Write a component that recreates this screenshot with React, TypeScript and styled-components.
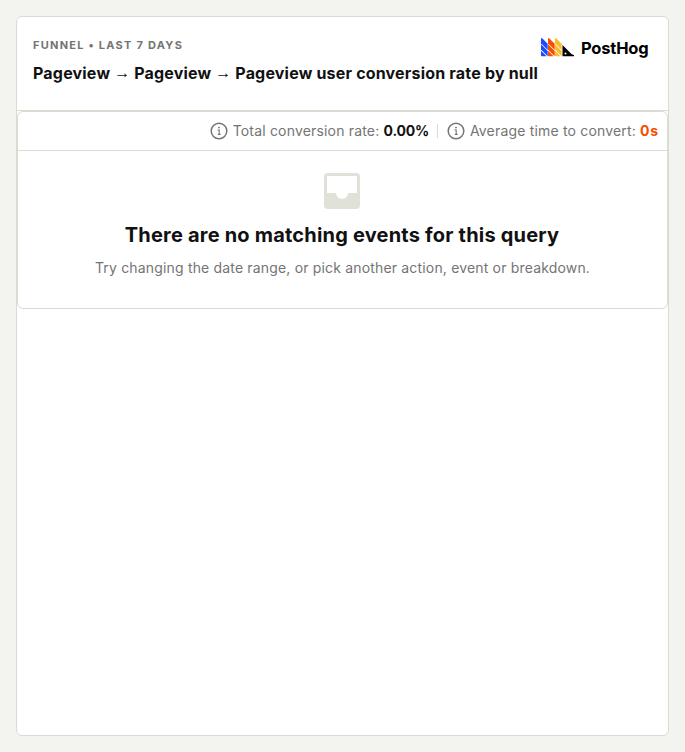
import React from 'react';
import styled, { createGlobalStyle } from 'styled-components';

const GlobalStyle = createGlobalStyle`
  *, *::before, *::after { box-sizing: border-box; }
  body {
    margin: 0;
    background: #f3f4ef;
    color: #111;
    font-family: Inter, 'Liberation Sans', sans-serif;
    font-size: 14px;
    line-height: 20px;
  }
`;

const Page = styled.main`
  height: 100vh;
  padding: 16px;
`;

const Card = styled.section`
  height: 100%;
  background: #fff;
  border: 1px solid #dadbd2;
  border-radius: 6px;
  overflow: hidden;
`;

const Header = styled.header`
  display: flex;
  justify-content: space-between;
  height: 94px;
  padding: 20px 16px 0;
  border-bottom: 1px solid #dadbd2;
`;

const Heading = styled.div`
  display: flex;
  flex-direction: column;
  gap: 10px;
  white-space: nowrap;
`;

const Eyebrow = styled.h5`
  margin: 0;
  color: #747474;
  font-size: 11px;
  line-height: 16px;
  font-weight: 700;
  letter-spacing: 1.25px;
  text-transform: uppercase;
`;

const Title = styled.h4`
  margin: 0;
  font-size: 16px;
  line-height: 20px;
  font-weight: 700;
  letter-spacing: 0.19px;
`;

const Arrow = styled.span`
  display: inline-block;
  font-family: 'Liberation Sans', sans-serif;
  font-weight: 400;
  line-height: 1;
  letter-spacing: 0;
  transform: translateY(-1px);
`;

const Brand = styled.div`
  display: flex;
  align-items: flex-start;
  flex: none;
  width: 111px;
`;

const Mark = styled.svg`
  flex: none;
  width: 34px;
  height: 20px;
  margin-top: 1px;
`;

const Wordmark = styled.span`
  margin-left: 6px;
  color: #000;
  font-size: 16.5px;
  line-height: 22px;
  font-weight: 700;
  letter-spacing: -0.2px;
`;

const Insight = styled.div`
  height: 198px;
  border: 1px solid #dadbd2;
  border-radius: 6px;
`;

const Metrics = styled.div`
  display: flex;
  align-items: center;
  justify-content: flex-end;
  height: 39px;
  padding-right: 8px;
  border-bottom: 1px solid #dadbd2;
`;

const Metric = styled.div`
  display: flex;
  align-items: center;
  color: #747474;
  letter-spacing: 0.18px;
  white-space: pre;
`;

const Divider = styled.span`
  width: 1px;
  height: 14px;
  margin: 0 9px 0 8px;
  background: #dadbd2;
`;

const InfoSvg = styled.svg`
  width: 18px;
  height: 18px;
  margin-right: 5px;
`;

const Value = styled.strong<{ $accent?: boolean }>`
  color: ${({ $accent }) => ($accent ? '#f54e00' : '#111')};
  font-weight: 700;
  letter-spacing: ${({ $accent }) => ($accent ? '0.8px' : '-0.2px')};
`;

const Empty = styled.div`
  display: flex;
  flex-direction: column;
  align-items: center;
  padding-top: 22px;
  text-align: center;
`;

const Tray = styled.svg`
  width: 36px;
  height: 36px;
  margin-right: 1px;
`;

const EmptyTitle = styled.h2`
  margin: 12px 1px 9px 0;
  font-size: 20px;
  line-height: 28px;
  font-weight: 700;
  letter-spacing: 0.2px;
`;

const EmptyText = styled.p`
  margin: 0;
  color: #747474;
  letter-spacing: 0.17px;
`;

const InfoIcon = () => (
  <InfoSvg viewBox="0 0 18 18" fill="none" stroke="#747474" aria-hidden="true">
    <circle cx="9" cy="9" r="7.8" strokeWidth="1.5" />
    <path d="M7.5 8H9.2V12.4M7.8 12.4H10.6" strokeWidth="1.1" />
    <circle cx="9" cy="5.6" r="0.9" fill="#747474" stroke="none" />
  </InfoSvg>
);

const Stripes = () => (
  <>
    <path d="M0 .9Q.1-.5 1.2.3L6.7 5.8V11.9L0 5.2Z" />
    <path d="M0 6.3L6.7 13V18.3L0 11.6Z" />
    <path d="M0 12.7L5.6 18.3H.7Q0 18.3 0 17.6Z" />
  </>
);

const PostHogLogo = () => (
  <Brand>
    <Mark viewBox="0 0 34 20" aria-hidden="true">
      <g fill="#1d4aff"><Stripes /></g>
      <g fill="#f54e00" transform="translate(7 0)"><Stripes /></g>
      <g fill="#f9bd2b" transform="translate(14 0)"><Stripes /></g>
      <path fillRule="evenodd" d="M21.5 7.1L30.2 15.8Q31.2 16.7 33 16.9V18.3H21.5ZM24.5 14.5a1 1 0 1 0 0 2a1 1 0 0 0 0-2Z" />
    </Mark>
    <Wordmark>PostHog</Wordmark>
  </Brand>
);

export default function App() {
  return (
    <>
      <GlobalStyle />
      <Page>
        <Card>
          <Header>
            <Heading>
              <Eyebrow>Funnel • Last 7 days</Eyebrow>
              <Title>
                Pageview <Arrow>→</Arrow> Pageview <Arrow>→</Arrow> Pageview user conversion rate by null
              </Title>
            </Heading>
            <PostHogLogo />
          </Header>
          <Insight>
            <Metrics>
              <Metric><InfoIcon />Total conversion rate: <Value>0.00%</Value></Metric>
              <Divider />
              <Metric><InfoIcon />Average time to convert: <Value $accent>0s</Value></Metric>
            </Metrics>
            <Empty>
              <Tray viewBox="0 0 36 36" aria-hidden="true">
                <path fill="#e0e2da" fillRule="evenodd" d="M4 0H32a4 4 0 0 1 4 4V32a4 4 0 0 1-4 4H4a4 4 0 0 1-4-4V4a4 4 0 0 1 4-4ZM3 3V20H12a6 6 0 0 0 12 0H33V3Z" />
              </Tray>
              <EmptyTitle>There are no matching events for this query</EmptyTitle>
              <EmptyText>Try changing the date range, or pick another action, event or breakdown.</EmptyText>
            </Empty>
          </Insight>
        </Card>
      </Page>
    </>
  );
}
